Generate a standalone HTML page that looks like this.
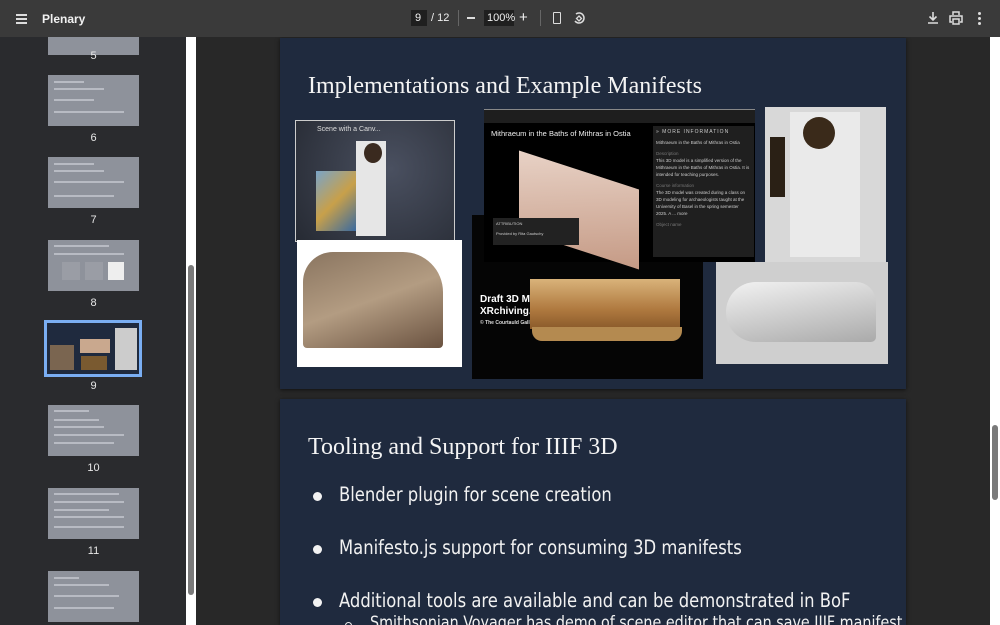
<!DOCTYPE html>
<html><head><meta charset="utf-8"><style>
*{margin:0;padding:0;box-sizing:border-box}
html,body{width:1000px;height:625px;overflow:hidden}
body{background:#282828;font-family:"Liberation Sans",sans-serif;position:relative}
.a{position:absolute}
.tb{left:0;top:0;width:1000px;height:37px;background:#3a3a3a;color:#f1f1f1;font-size:13px;z-index:5}
.side{left:0;top:37px;width:196px;height:588px;background:#2a2b2e;overflow:hidden}
.th{position:absolute;left:48px;width:91px;height:51px;background:#8e929b}
.th i{position:absolute;left:6px;height:2px;background:#b8bbc3;display:block}
.lbl{position:absolute;left:48px;width:91px;text-align:center;color:#e8e8e8;font-size:11px}
.slide{background:#1f2a3e;box-shadow:0 1px 4px rgba(0,0,0,.6);overflow:hidden}
.title{font-family:"Liberation Serif",serif;color:#f4f4f4;font-size:24px}
.bul{color:#f2f2f2;font-size:19.5px;font-family:"DejaVu Sans Condensed","Liberation Sans Narrow","Liberation Sans",sans-serif;transform:scaleX(0.935);transform-origin:left;white-space:nowrap}
.dot{position:absolute;width:9px;height:9px;border-radius:50%;background:#f2f2f2}
</style></head><body>
<div class="a tb">
 <div class="a" style="left:16px;top:14px;width:11px;height:2px;background:#ddd;box-shadow:0 4px 0 #ddd,0 8px 0 #ddd"></div>
 <div class="a" style="left:42px;top:12px;font-size:12px;font-weight:bold">Plenary</div>
 <div class="a" style="left:411px;top:10px;width:16px;height:16px;background:#1f1f1f"></div>
 <div class="a" style="left:415px;top:12px;font-size:11px">9</div>
 <div class="a" style="left:431px;top:12px;font-size:11px">/ 12</div>
 <div class="a" style="left:458px;top:10px;width:1px;height:16px;background:#666"></div>
 <div class="a" style="left:467px;top:17px;width:8px;height:1.5px;background:#ddd"></div>
 <div class="a" style="left:484px;top:10px;width:30px;height:16px;background:#1f1f1f"></div>
 <div class="a" style="left:487px;top:12px;font-size:11px">100%</div>
 <div class="a" style="left:519px;top:9px;font-size:15px">+</div>
 <div class="a" style="left:540px;top:10px;width:1px;height:16px;background:#666"></div>
 <div class="a" style="left:553px;top:12px;width:8px;height:12px;border:1.5px solid #ddd;border-radius:1px"></div>
 <svg class="a" style="left:572px;top:11px" width="14" height="14" viewBox="0 0 14 14"><path d="M4 3A5 5 0 1 1 3 10" fill="none" stroke="#ddd" stroke-width="1.5"/><path d="M7 5L9.5 7.5 7 10 4.5 7.5Z" fill="none" stroke="#ddd" stroke-width="1.3"/></svg>
 <svg class="a" style="left:926px;top:11px" width="14" height="14" viewBox="0 0 14 14"><path d="M7 1V9M3.5 5.5L7 9 10.5 5.5M2 12H12" fill="none" stroke="#ddd" stroke-width="1.6"/></svg>
 <svg class="a" style="left:949px;top:11px" width="14" height="14" viewBox="0 0 14 14"><path d="M4 4V1H10V4M3 11H1V5H13V11H11M4 8H10V13H4Z" fill="none" stroke="#ddd" stroke-width="1.5"/></svg>
 <div class="a" style="left:978px;top:12px;width:3px;height:3px;background:#ddd;border-radius:50%;box-shadow:0 5px 0 #ddd,0 10px 0 #ddd"></div>
</div>
<div class="a side">
 <div class="th" style="top:-33px"></div><div class="lbl" style="top:13px">5</div>
 <div class="th" style="top:38px"><i style="top:6px;width:30px"></i><i style="top:13px;width:50px"></i><i style="top:24px;width:40px"></i><i style="top:36px;width:70px"></i></div><div class="lbl" style="top:95px">6</div>
 <div class="th" style="top:120px"><i style="top:6px;width:40px"></i><i style="top:13px;width:50px"></i><i style="top:24px;width:70px"></i><i style="top:38px;width:60px"></i></div><div class="lbl" style="top:177px">7</div>
 <div class="th" style="top:203px"><i style="top:5px;width:55px"></i><i style="top:13px;width:70px"></i><div class="a" style="left:14px;top:22px;width:18px;height:18px;background:#9a9da5"></div><div class="a" style="left:37px;top:22px;width:18px;height:18px;background:#9a9da5"></div><div class="a" style="left:60px;top:22px;width:16px;height:18px;background:#eee"></div></div><div class="lbl" style="top:260px">8</div>
 <div class="a" style="left:44px;top:283px;width:98px;height:57px;background:#7aaef3;padding:3px"><div style="width:92px;height:51px;background:#1f2a3e;position:relative"><div class="a" style="left:3px;top:22px;width:24px;height:25px;background:#7a6550"></div><div class="a" style="left:33px;top:16px;width:30px;height:14px;background:#c9a88e"></div><div class="a" style="left:34px;top:33px;width:26px;height:14px;background:#7a5a30"></div><div class="a" style="left:68px;top:5px;width:22px;height:42px;background:#ccc"></div></div></div><div class="lbl" style="top:343px">9</div>
 <div class="th" style="top:368px"><i style="top:5px;width:35px"></i><i style="top:14px;width:45px"></i><i style="top:21px;width:50px"></i><i style="top:29px;width:70px"></i><i style="top:37px;width:60px"></i></div><div class="lbl" style="top:425px">10</div>
 <div class="th" style="top:451px"><i style="top:5px;width:65px"></i><i style="top:13px;width:70px"></i><i style="top:21px;width:55px"></i><i style="top:28px;width:70px"></i><i style="top:38px;width:70px"></i></div><div class="lbl" style="top:508px">11</div>
 <div class="th" style="top:534px"><i style="top:6px;width:25px"></i><i style="top:13px;width:55px"></i><i style="top:24px;width:65px"></i><i style="top:36px;width:60px"></i></div>
 <div class="a" style="left:186px;top:0;width:10px;height:588px;background:#fff"></div>
 <div class="a" style="left:188px;top:228px;width:6px;height:330px;background:#7a7a7a;border-radius:3px"></div>
</div>
<div class="a" style="left:990px;top:37px;width:10px;height:588px;background:#fff"></div>
<div class="a" style="left:992px;top:425px;width:6px;height:75px;background:#7a7a7a;border-radius:3px"></div>

<div class="a slide" style="left:280px;top:38px;width:626px;height:351px">
 <div class="a title" style="left:28px;top:35px">Implementations and Example Manifests</div>
</div>
<div class="a" style="left:295px;top:120px;width:160px;height:122px;background:radial-gradient(circle at 60% 40%,#4a5060,#262a33);border:1px solid #ccc">
 <div class="a" style="left:21px;top:5px;font-size:7px;color:#ddd">Scene with a Canv...</div>
 <div class="a" style="left:60px;top:20px;width:30px;height:95px;background:#e6e6e6"></div>
 <div class="a" style="left:68px;top:22px;width:18px;height:20px;background:#3a2a1f;border-radius:50%"></div>
 <div class="a" style="left:20px;top:50px;width:40px;height:60px;background:linear-gradient(135deg,#7aa4c8,#c8a04a,#3a6aa0)"></div>
</div>
<div class="a" style="left:297px;top:240px;width:165px;height:127px;background:#fff">
 <div class="a" style="left:6px;top:12px;width:140px;height:96px;background:linear-gradient(160deg,#8a7560,#b39c82 50%,#6a5240);border-radius:30px 40px 4px 4px"></div>
</div>
<div class="a" style="left:472px;top:215px;width:231px;height:164px;background:#050505">
 <div class="a" style="left:8px;top:79px;font-size:10px;font-weight:bold;color:#fff;line-height:12px">Draft 3D Mod<br>XRchiving.lor</div>
 <div class="a" style="left:8px;top:105px;font-size:5px;font-weight:bold;color:#ddd">© The Courtauld Galle</div>
 <div class="a" style="left:58px;top:64px;width:150px;height:50px;background:linear-gradient(180deg,#d9b37a,#b07a40 60%,#8a5a2a)"></div>
 <div class="a" style="left:60px;top:112px;width:150px;height:14px;background:#b48a50;border-radius:0 0 10px 10px"></div>
</div>
<div class="a" style="left:484px;top:109px;width:271px;height:153px;background:#000;border-top:1px solid #888">
 <div style="height:13px;background:#1e1e1e"></div>
 <div class="a" style="left:7px;top:19px;font-size:7.5px;color:#eee">Mithraeum in the Baths of Mithras in Ostia</div>
 <div class="a" style="left:35px;top:60px;width:120px;height:80px;background:linear-gradient(160deg,#e8d2c6,#c59a85);transform:skewY(18deg)"></div>
 <div class="a" style="left:169px;top:16px;width:101px;height:131px;background:#1f1f1f;padding:3px;font-size:4.5px;color:#ccc;line-height:7px">
  <div style="font-size:5px;letter-spacing:1px">» MORE INFORMATION</div>
  <div style="margin-top:3px">Mithraeum in the Baths of Mithras in Ostia</div>
  <div style="color:#777;margin-top:4px">Description</div>
  <div>This 3D model is a simplified version of the Mithraeum in the Baths of Mithras in Ostia. It is intended for teaching purposes.</div>
  <div style="color:#777;margin-top:4px">Course information</div>
  <div>The 3D model was created during a class on 3D modeling for archaeologists taught at the University of Basel in the spring semester 2025. A ... more</div>
  <div style="color:#777;margin-top:4px">Object name</div>
 </div>
</div>
<div class="a" style="left:493px;top:218px;width:86px;height:27px;background:#222;font-size:4px;color:#ccc;padding:3px">ATTRIBUTION<br><br>Provided by Rita Gautschy</div>
<div class="a" style="left:765px;top:107px;width:121px;height:155px;background:#d8d8d8">
 <div class="a" style="left:25px;top:5px;width:70px;height:145px;background:#eaeaea"></div>
 <div class="a" style="left:38px;top:10px;width:32px;height:32px;background:#3a2a1a;border-radius:50%"></div>
 <div class="a" style="left:5px;top:30px;width:15px;height:60px;background:#2a2015"></div>
</div>
<div class="a" style="left:716px;top:262px;width:172px;height:102px;background:#cfcfcf">
 <div class="a" style="left:10px;top:20px;width:150px;height:60px;background:linear-gradient(170deg,#f2f2f2,#aaa);border-radius:60px 40px 10px 60px"></div>
</div>

<div class="a slide" style="left:280px;top:399px;width:626px;height:226px">
 <div class="a title" style="left:28px;top:35px">Tooling and Support for IIIF 3D</div>
 <div class="dot" style="left:33px;top:93px"></div><div class="a bul" style="left:59px;top:84px">Blender plugin for scene creation</div>
 <div class="dot" style="left:33px;top:146px"></div><div class="a bul" style="left:59px;top:137px">Manifesto.js support for consuming 3D manifests</div>
 <div class="dot" style="left:33px;top:199px"></div><div class="a bul" style="left:59px;top:190px">Additional tools are available and can be demonstrated in BoF</div>
 <div class="a" style="left:65px;top:223px;width:7px;height:7px;border:1.5px solid #eee;border-radius:50%"></div>
 <div class="a bul" style="left:90px;top:214px;font-size:17px">Smithsonian Voyager has demo of scene editor that can save IIIF manifest</div>
</div>
</body></html>
